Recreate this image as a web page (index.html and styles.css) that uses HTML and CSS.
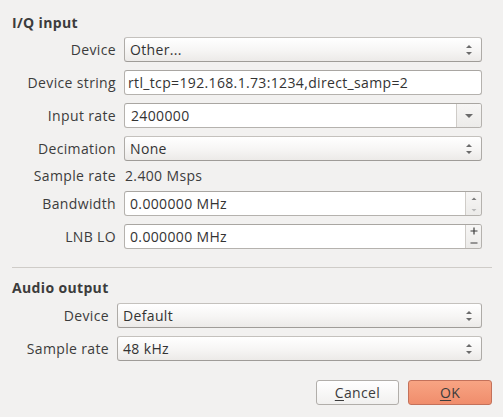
FILE: index.html
```html
<!DOCTYPE html>
<html>
<head>
<meta charset="utf-8">
<link rel="stylesheet" href="styles.css">
</head>
<body>
<div class="dialog">
  <section class="group iq">
    <div class="group-title">I/Q input</div>
    <div class="form">
      <label class="lbl">Device</label>
      <div class="combo"><span>Other...</span><svg class="updown" width="8" height="14" viewBox="0 0 8 14"><path d="M1 5 L4 2 L7 5 Z" fill="#6b6b6b"/><path d="M1 9 L4 12 L7 9 Z" fill="#6b6b6b"/></svg></div>

      <label class="lbl">Device string</label>
      <div class="edit"><span>rtl_tcp=192.168.1.73:1234,direct_samp=2</span></div>

      <label class="lbl">Input rate</label>
      <div class="edit editcombo"><span class="val">2400000</span><span class="dropbtn"><svg width="10" height="6" viewBox="0 0 10 6"><path d="M1 1 L9 1 L5 5 Z" fill="#6b6b6b"/></svg></span></div>

      <label class="lbl">Decimation</label>
      <div class="combo"><span>None</span><svg class="updown" width="8" height="14" viewBox="0 0 8 14"><path d="M1 5 L4 2 L7 5 Z" fill="#6b6b6b"/><path d="M1 9 L4 12 L7 9 Z" fill="#6b6b6b"/></svg></div>

      <label class="lbl lbl-text">Sample rate</label>
      <div class="plain">2.400 Msps</div>

      <label class="lbl">Bandwidth</label>
      <div class="edit spin"><span class="val">0.000000 MHz</span><span class="spinbtns"><svg width="8" height="20" viewBox="0 0 8 20"><path d="M1.5 6 L4 3.5 L6.5 6 Z" fill="#7a7a7a"/><path d="M1.5 15 L4 17.5 L6.5 15 Z" fill="#b9b9b9"/></svg></span></div>

      <label class="lbl">LNB LO</label>
      <div class="edit spin"><span class="val">0.000000 MHz</span><span class="spinbtns"><svg width="10" height="22" viewBox="0 0 10 22"><path d="M5 1.5 V8.5 M1.5 5 H8.5" stroke="#3c3c3c" stroke-width="1.2"/><path d="M1.5 17 H8.5" stroke="#3c3c3c" stroke-width="1.2"/></svg></span></div>
    </div>
  </section>

  <hr class="sep">

  <section class="group audio">
    <div class="group-title">Audio output</div>
    <div class="form form-audio">
      <label class="lbl">Device</label>
      <div class="combo"><span>Default</span><svg class="updown" width="8" height="14" viewBox="0 0 8 14"><path d="M1 5 L4 2 L7 5 Z" fill="#6b6b6b"/><path d="M1 9 L4 12 L7 9 Z" fill="#6b6b6b"/></svg></div>

      <label class="lbl">Sample rate</label>
      <div class="combo"><span>48 kHz</span><svg class="updown" width="8" height="14" viewBox="0 0 8 14"><path d="M1 5 L4 2 L7 5 Z" fill="#6b6b6b"/><path d="M1 9 L4 12 L7 9 Z" fill="#6b6b6b"/></svg></div>
    </div>
  </section>

  <div class="buttons">
    <button class="btn"><u>C</u>ancel</button>
    <button class="btn btn-ok"><u>O</u>K</button>
  </div>
</div>
</body>
</html>
```

FILE: styles.css
```css
html, body {
  margin: 0;
  padding: 0;
  background: #f2f1f0;
}
body {
  font-family: "Open Sans", "DejaVu Sans", sans-serif;
  font-size: 14px;
  letter-spacing: 0.35px;
  color: #3c3c3c;
  width: 503px;
  height: 417px;
  overflow: hidden;
}
.dialog {
  padding: 14px 11px 0 12px;
}
.group-title {
  font-weight: bold;
  line-height: 18px;
  height: 18px;
}
.form {
  display: grid;
  grid-template-columns: 104px 1fr;
  column-gap: 8px;
  row-gap: 8px;
  margin-top: 5px;
  margin-right: 10px;
}
.form-audio {
  grid-template-columns: 97px 1fr;
  margin-top: 6px;
}
.lbl {
  text-align: right;
  align-self: center;
  line-height: 18px;
  color: #3c3c3c;
}
.lbl-text {
  line-height: 14px;
}
.plain {
  align-self: center;
  line-height: 14px;
  padding-left: 1px;
}
.combo, .edit {
  box-sizing: border-box;
  height: 25px;
  border-radius: 3px;
  display: flex;
  align-items: center;
  color: #333;
}
.combo {
  border: 1px solid #aeaba7;
  border-top-color: #c4c1bd;
  border-bottom-color: #9f9c98;
  background: linear-gradient(#ffffff, #f6f5f4 55%, #eceae8);
  padding: 0 8px 0 5px;
  justify-content: space-between;
}
.edit {
  border: 1px solid #b5b2ae;
  border-top-color: #a9a6a2;
  background: #ffffff;
  padding-left: 3px;
  overflow: hidden;
}
.editcombo, .spin {
  padding-right: 0;
}
.editcombo .val, .spin .val {
  flex: 1;
  padding-left: 3px;
}
.spin .val {
  padding-left: 2px;
}
.dropbtn {
  align-self: stretch;
  width: 24px;
  border-left: 1px solid #cfccc8;
  background: linear-gradient(#f7f6f5, #ecebe9);
  display: flex;
  align-items: center;
  justify-content: center;
}
.spinbtns {
  align-self: stretch;
  width: 15px;
  border-left: 1px solid #cfccc8;
  background: linear-gradient(#f7f6f5, #ecebe9);
  display: flex;
  align-items: center;
  justify-content: center;
}
.updown {
  display: block;
}
.sep {
  border: 0;
  border-top: 1px solid #cfccc8;
  margin: 18px 0 0 0;
  height: 0;
}
.audio {
  margin-top: 11px;
}
.buttons {
  display: flex;
  justify-content: flex-end;
  gap: 9px;
  margin-top: 19px;
}
.btn {
  box-sizing: border-box;
  height: 25px;
  width: 83px;
  font-family: inherit;
  font-size: 14px;
  letter-spacing: 0.35px;
  color: #3c3c3c;
  border: 1px solid #b1aeaa;
  border-radius: 3px;
  background: linear-gradient(#ffffff, #f1f0ef);
  padding: 0;
  line-height: 22px;
}
.btn u {
  text-decoration-thickness: 1px;
  text-underline-offset: 2px;
}
.btn-ok {
  width: 84px;
  border-color: #c4715a;
  background: linear-gradient(#f8a483, #f08d6c);
}
```
